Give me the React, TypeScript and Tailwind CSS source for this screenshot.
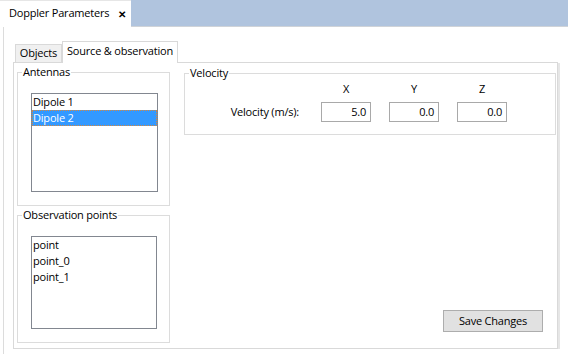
import React from "react"

const FONT = "font-['Open_Sans','Noto_Sans',sans-serif] text-[11px] tracking-[-0.2px] text-black"

function GroupBox({
  title,
  className,
  children,
}: {
  title: string
  className?: string
  children: React.ReactNode
}) {
  return (
    <fieldset className="border border-[#dcdcdc]">
      <legend className="ml-[4px] px-[1px] leading-[16px]">{title}</legend>
      <div className={className}>{children}</div>
    </fieldset>
  )
}

function ListBox({
  items,
  selected,
  height,
  width,
}: {
  items: string[]
  selected?: number
  height: string
  width: string
}) {
  return (
    <div className={`border border-[#828790] bg-white ${height} ${width}`}>
      {items.map((item, i) =>
        i === selected ? (
          <div
            key={item}
            className="h-[16px] leading-[14px] bg-[#3399ff] text-white border border-dotted border-[#d9873a]"
          >
            {item}
          </div>
        ) : (
          <div key={item} className="h-[16px] leading-[16px] pl-[1px]">
            {item}
          </div>
        )
      )}
    </div>
  )
}

function NumberField({ value }: { value: string }) {
  return (
    <div className="h-[20px] w-[50px] border border-[#a9a9a9] bg-white text-right pr-[4px] leading-[18px]">
      {value}
    </div>
  )
}

export default function App() {
  return (
    <div className={`w-[568px] h-[354px] bg-white overflow-hidden ${FONT}`}>
      {/* document tab strip */}
      <div className="flex h-[27px]">
        <div className="w-[131px] h-full bg-white border-t border-[#e6e6e6] flex items-center pl-[9px] pb-[1px]">
          <span>Doppler Parameters</span>
          <span className="ml-[9px] text-[10px] font-bold leading-none">✕</span>
        </div>
        <div className="flex-1 bg-[#b0c4de] border-b border-[#cfd3d8]" />
      </div>

      <div className="flex h-[327px]">
        <div className="ml-[3px] border-l border-[#dcdcdc] flex-1 pl-[9px] pt-[14px]">
          {/* tab bar */}
          <div className="flex items-end h-[21px]">
            <div className="ml-[2px] w-[47px] h-[18px] bg-[#f0f0f0] border border-b-0 border-[#d9d9d9] flex items-center justify-center">
              Objects
            </div>
            <div className="relative z-10 -mb-px w-[116px] h-[22px] bg-white border border-b-0 border-[#d9d9d9] flex items-center justify-center pb-[2px]">
              Source &amp; observation
            </div>
          </div>

          {/* pane */}
          <div className="flex">
            <div className="w-[545px] h-[287px] border border-[#d9d9d9] flex pl-[3px] pt-[1px]">
              <div className="w-[153px] flex flex-col gap-[1px]">
                <GroupBox title="Antennas" className="pl-[13px] pt-[13px] pb-[13px]">
                  <ListBox items={["Dipole 1", "Dipole 2"]} selected={1} height="h-[99px]" width="w-[127px]" />
                </GroupBox>
                <GroupBox title="Observation points" className="pl-[13px] pt-[13px] pb-[13px]">
                  <ListBox items={["point", "point_0", "point_1"]} height="h-[93px]" width="w-[126px]" />
                </GroupBox>
              </div>

              <div className="flex-1 ml-[14px] mr-[1px] pt-[1px] flex flex-col">
                <GroupBox title="Velocity" className="pb-[12px]">
                  <div className="grid grid-cols-[118px_50px_50px_50px] gap-x-[18px] gap-y-[5px] items-center">
                    <div />
                    <div className="text-center leading-[16px]">X</div>
                    <div className="text-center leading-[16px]">Y</div>
                    <div className="text-center leading-[16px]">Z</div>
                    <div className="text-right pr-[4px]">Velocity (m/s):</div>
                    <NumberField value="5.0" />
                    <NumberField value="0.0" />
                    <NumberField value="0.0" />
                  </div>
                </GroupBox>
                <div className="mt-auto mb-[16px] mr-[13px] flex justify-end">
                  <button
                    type="button"
                    className="w-[100px] h-[22px] bg-[#e1e1e1] border border-[#adadad] leading-[20px]"
                  >
                    Save Changes
                  </button>
                </div>
              </div>
            </div>
            <div className="w-[2px] mt-[1px] bg-[#e6e6e6]" />
          </div>
        </div>
      </div>
    </div>
  )
}
